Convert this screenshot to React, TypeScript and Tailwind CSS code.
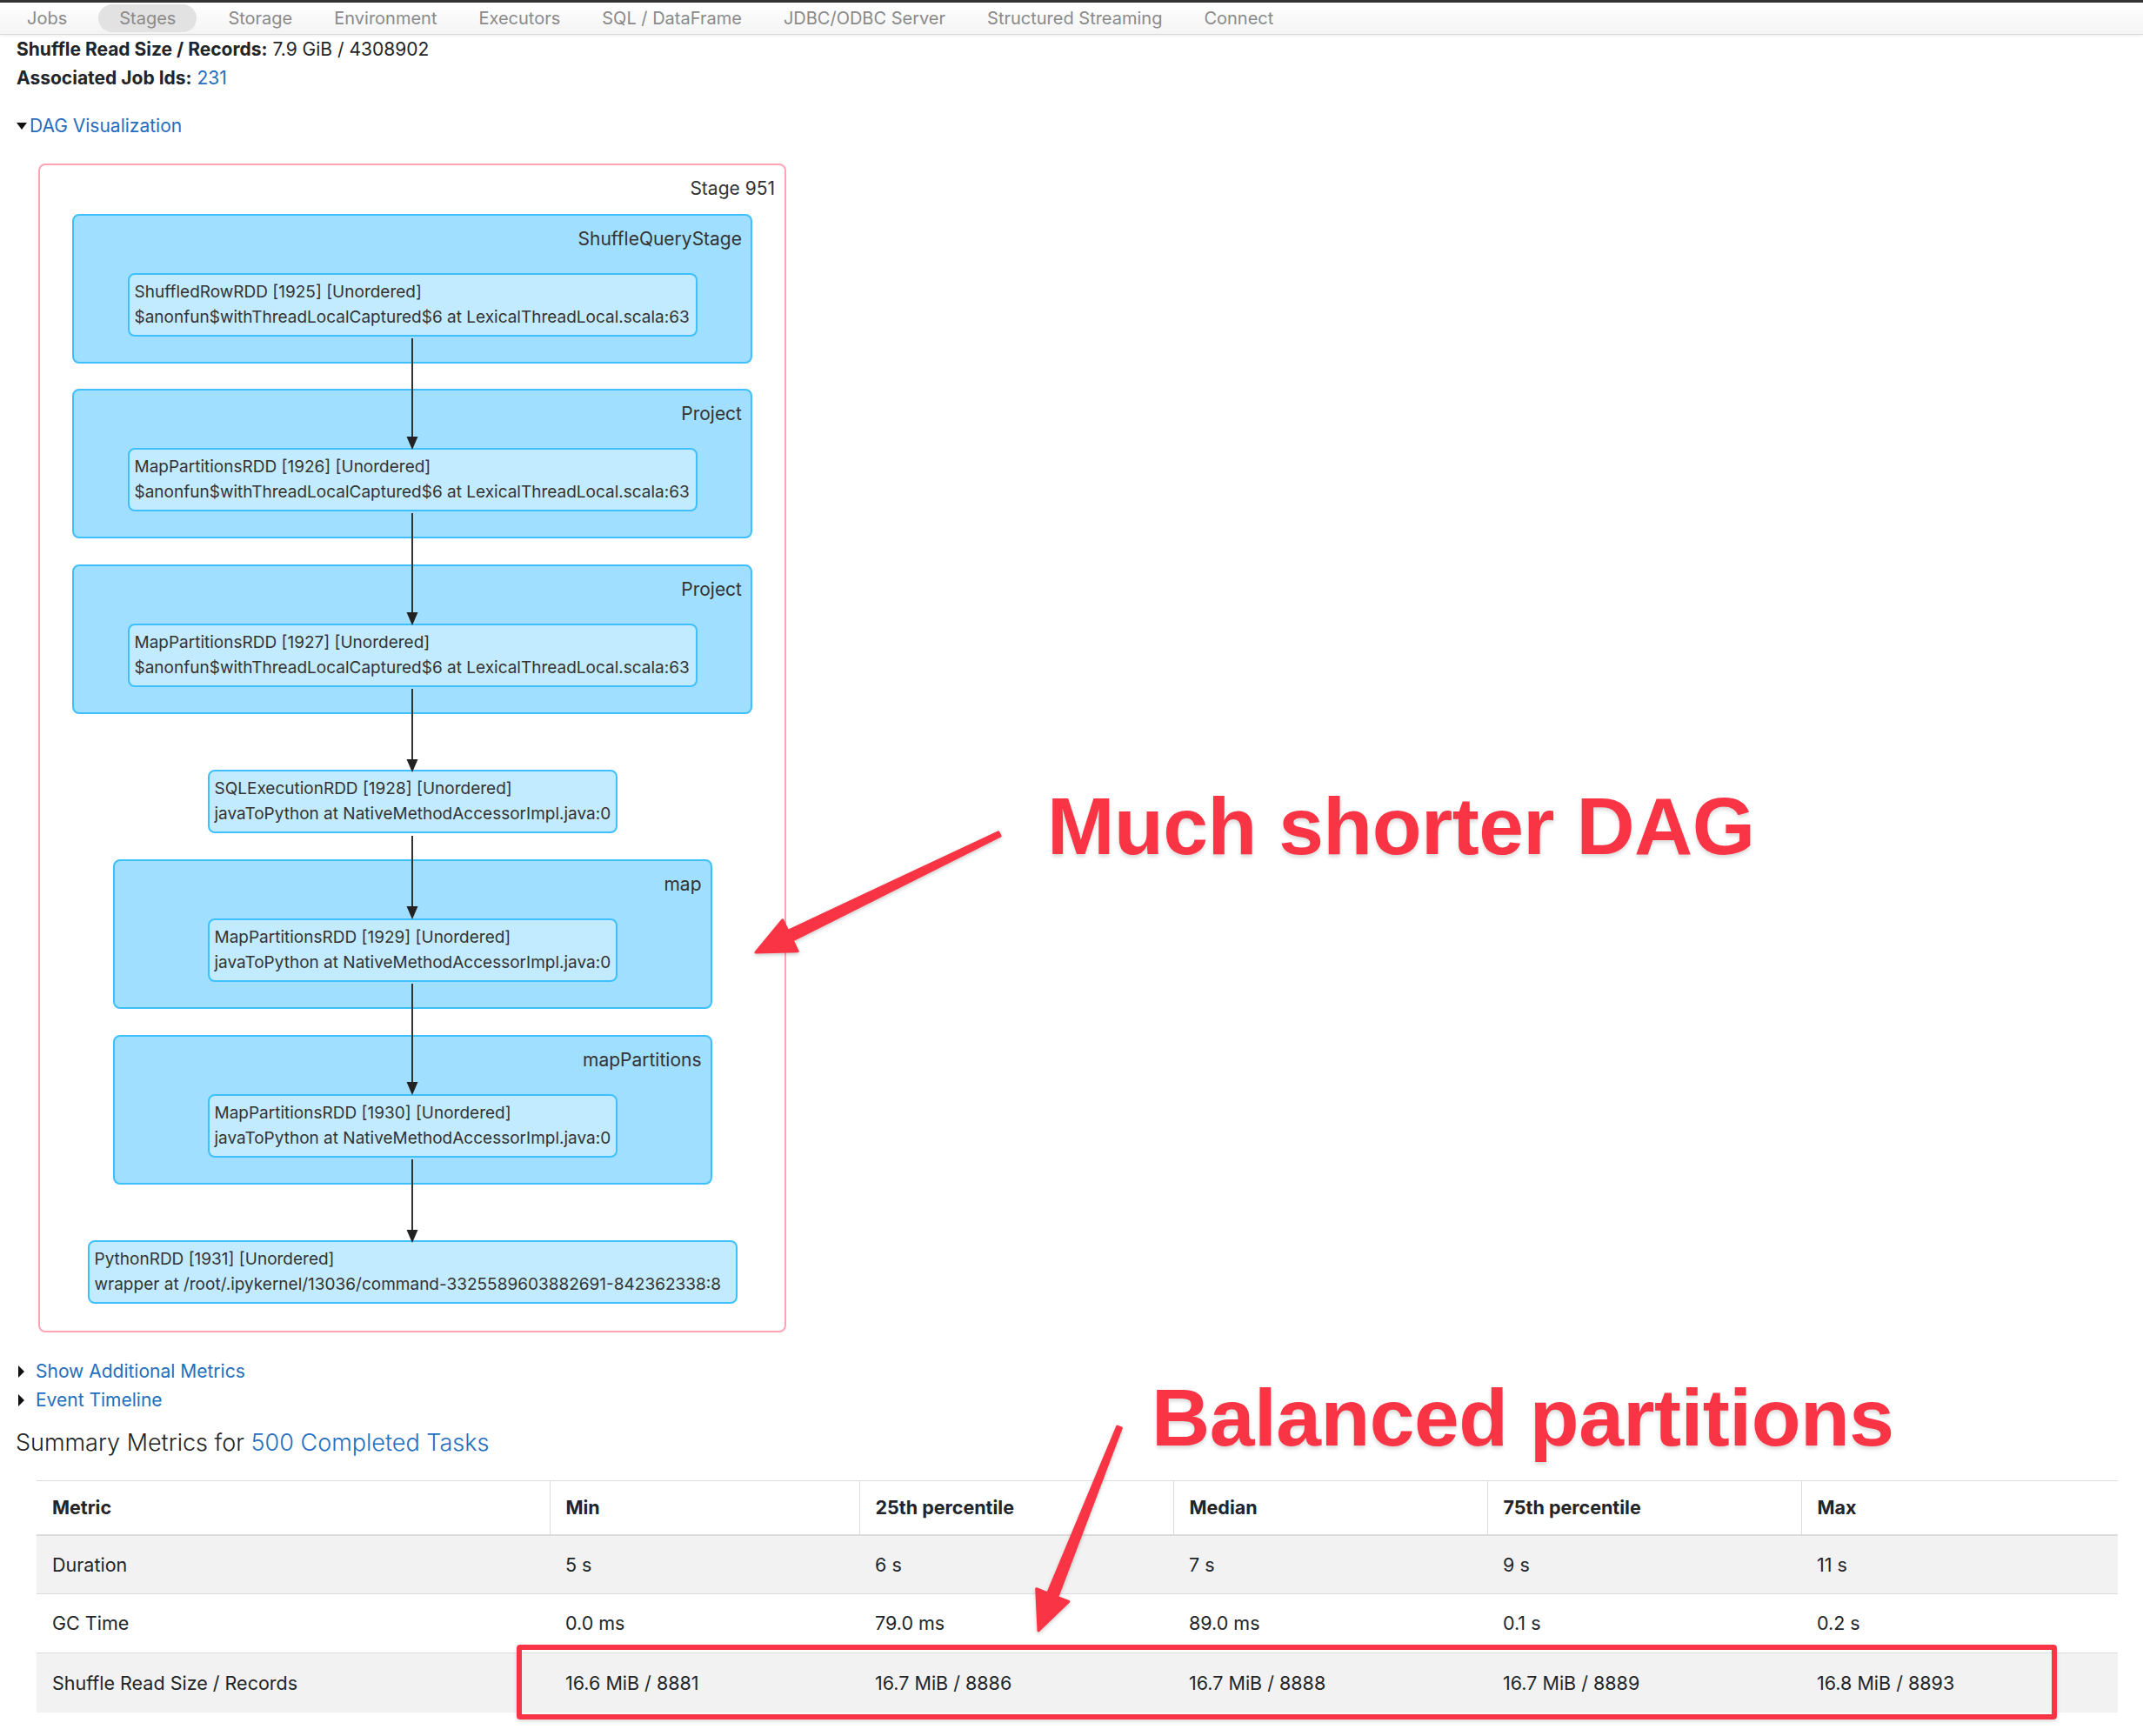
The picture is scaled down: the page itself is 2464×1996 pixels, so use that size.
import React from "react";

const navItems = [
  "Jobs",
  "Stages",
  "Storage",
  "Environment",
  "Executors",
  "SQL / DataFrame",
  "JDBC/ODBC Server",
  "Structured Streaming",
  "Connect",
];

const DESC_SCALA = "$anonfun$withThreadLocalCaptured$6 at LexicalThreadLocal.scala:63";
const DESC_JAVA = "javaToPython at NativeMethodAccessorImpl.java:0";

const headers = ["Metric", "Min", "25th percentile", "Median", "75th percentile", "Max"];
const colWidths = ["w-[590px]", "w-[356px]", "w-[361px]", "w-[361px]", "w-[361px]", "w-[364px]"];

const rows = [
  ["Duration", "5 s", "6 s", "7 s", "9 s", "11 s"],
  ["GC Time", "0.0 ms", "79.0 ms", "89.0 ms", "0.1 s", "0.2 s"],
  [
    "Shuffle Read Size / Records",
    "16.6 MiB / 8881",
    "16.7 MiB / 8886",
    "16.7 MiB / 8888",
    "16.7 MiB / 8889",
    "16.8 MiB / 8893",
  ],
];

function RddNode({ title, desc, width }: { title: string; desc: string; width: string }) {
  return (
    <div
      className={`${width} h-[73px] shrink-0 rounded-[8px] border-2 border-[#3ec0ff] bg-[#c3ebff] px-[6px] pt-[5px] text-[19px] leading-[29px] text-[#333] whitespace-nowrap`}
    >
      <div>{title}</div>
      <div>{desc}</div>
    </div>
  );
}

function Cluster({
  label,
  width,
  className,
  children,
}: {
  label: string;
  width: string;
  className?: string;
  children: React.ReactNode;
}) {
  return (
    <div
      className={`${width} ${className ?? ""} h-[172px] shrink-0 flex flex-col rounded-[8px] border-2 border-[#3ec0ff] bg-[#a0dfff]`}
    >
      <div className="self-end pr-[10px] pt-[13px] h-[41px] text-[21px] leading-[28px] text-[#333]">
        {label}
      </div>
      <div className="self-center mt-[25px]">{children}</div>
    </div>
  );
}

// edges of the DAG, in panel coordinates (center x = 428)
const edges = [
  [199, 327],
  [400, 529],
  [602, 698],
  [771, 867],
  [941, 1069],
  [1143, 1239],
];

function DagEdges() {
  return (
    <svg className="absolute left-0 top-0 pointer-events-none" width={860} height={1344}>
      {edges.map(([y1, y2]) => (
        <g key={y1}>
          <line x1={428} y1={y1} x2={428} y2={y2 - 12} stroke="#333" strokeWidth={2} />
          <polygon points={`421.5,${y2 - 15} 434.5,${y2 - 15} 428,${y2}`} fill="#222" />
        </g>
      ))}
    </svg>
  );
}

function arrowPoints(sx: number, sy: number, tx: number, ty: number) {
  const dx = tx - sx;
  const dy = ty - sy;
  const len = Math.hypot(dx, dy);
  const ux = dx / len;
  const uy = dy / len;
  const nx = -uy;
  const ny = ux;
  const head = 44;
  const bx = tx - ux * head;
  const by = ty - uy * head;
  const pts: [number, number][] = [
    [sx + nx * 2.5, sy + ny * 2.5],
    [bx + nx * 6, by + ny * 6],
    [bx + nx * 20, by + ny * 20],
    [tx, ty],
    [bx - nx * 20, by - ny * 20],
    [bx - nx * 6, by - ny * 6],
    [sx - nx * 2.5, sy - ny * 2.5],
  ];
  return pts.map((p) => `${p[0].toFixed(1)},${p[1].toFixed(1)}`).join(" ");
}

function Triangle({ down }: { down?: boolean }) {
  return down ? (
    <svg width="12" height="10" viewBox="0 0 12 10" className="mr-[3px]">
      <polygon points="0,1 12,1 6,9" fill="#111" />
    </svg>
  ) : (
    <svg width="9" height="14" viewBox="0 0 9 14" className="mr-[12px]">
      <polygon points="1,0 8,7 1,14" fill="#111" />
    </svg>
  );
}

export default function App() {
  return (
    <div className="relative w-[2464px] h-[1996px] overflow-hidden bg-white font-['Inter','Noto_Sans',sans-serif] text-[#212529]">
      {/* top nav */}
      <div className="h-[40px] border-t-[3px] border-[#333] bg-gradient-to-b from-white to-[#f4f4f4] border-b border-b-[#d8d8d8] shadow-[0_1px_4px_rgba(0,0,0,0.08)] flex items-center pl-[13px] gap-[12px]">
        {navItems.map((item) => (
          <div
            key={item}
            className={`h-[32px] flex items-center rounded-full text-[20px] text-[#8a8a8a] ${
              item === "Stages" ? "bg-[#e2e2e2] px-[24px] mx-[6px]" : "px-[18px]"
            }`}
          >
            {item}
          </div>
        ))}
      </div>

      {/* stage summary */}
      <div className="pl-[19px] text-[21px] leading-[30px]">
        <div className="mt-[2px]">
          <span className="font-bold">Shuffle Read Size / Records:</span> 7.9 GiB / 4308902
        </div>
        <div className="mt-[3px]">
          <span className="font-bold">Associated Job Ids:</span>{" "}
          <span className="text-[#236ebe]">231</span>
        </div>
        <div className="mt-[25px] flex items-center text-[#236ebe]">
          <Triangle down />
          DAG Visualization
        </div>
      </div>

      {/* DAG */}
      <div className="relative ml-[44px] mt-[28px] w-[860px] h-[1344px] rounded-[8px] border-2 border-[#ffa4b4] flex flex-col items-center">
        <div className="absolute right-[11px] top-[13px] text-[21px] leading-[28px] text-[#333]">Stage 951</div>
        <Cluster label="ShuffleQueryStage" width="w-[782px]" className="mt-[56px]">
          <RddNode title="ShuffledRowRDD [1925] [Unordered]" desc={DESC_SCALA} width="w-[655px]" />
        </Cluster>
        <Cluster label="Project" width="w-[782px]" className="mt-[29px]">
          <RddNode title="MapPartitionsRDD [1926] [Unordered]" desc={DESC_SCALA} width="w-[655px]" />
        </Cluster>
        <Cluster label="Project" width="w-[782px]" className="mt-[30px]">
          <RddNode title="MapPartitionsRDD [1927] [Unordered]" desc={DESC_SCALA} width="w-[655px]" />
        </Cluster>
        <div className="mt-[64px]">
          <RddNode title="SQLExecutionRDD [1928] [Unordered]" desc={DESC_JAVA} width="w-[471px]" />
        </div>
        <Cluster label="map" width="w-[689px]" className="mt-[30px]">
          <RddNode title="MapPartitionsRDD [1929] [Unordered]" desc={DESC_JAVA} width="w-[471px]" />
        </Cluster>
        <Cluster label="mapPartitions" width="w-[689px]" className="mt-[30px]">
          <RddNode title="MapPartitionsRDD [1930] [Unordered]" desc={DESC_JAVA} width="w-[471px]" />
        </Cluster>
        <div className="mt-[64px]">
          <RddNode
            title="PythonRDD [1931] [Unordered]"
            desc="wrapper at /root/.ipykernel/13036/command-3325589603882691-842362338:8"
            width="w-[747px]"
          />
        </div>
        <DagEdges />
      </div>

      {/* collapsible links */}
      <div className="pl-[20px] mt-[28px] text-[21px] leading-[33px] text-[#236ebe]">
        <div className="flex items-center">
          <Triangle />
          Show Additional Metrics
        </div>
        <div className="flex items-center">
          <Triangle />
          Event Timeline
        </div>
      </div>
      <div className="pl-[18px] mt-[13px] text-[27px] leading-[40px] font-light text-[#222]">
        Summary Metrics for <span className="text-[#236ebe]">500 Completed Tasks</span>
      </div>

      {/* summary table */}
      <table className="ml-[42px] mt-[23px] border-collapse table-fixed text-[21.5px] text-[#212529]">
        <thead>
          <tr className="h-[62px] border-t border-[#dcdcdc] border-b-2 border-b-[#dcdcdc]">
            {headers.map((h, i) => (
              <th
                key={h}
                className={`${colWidths[i]} text-left font-bold px-[18px] ${i > 0 ? "border-l border-[#dcdcdc]" : ""}`}
              >
                {h}
              </th>
            ))}
          </tr>
        </thead>
        <tbody>
          {rows.map((r, ri) => (
            <tr
              key={r[0]}
              className={`h-[68px] border-t border-[#dcdcdc] ${ri % 2 === 0 ? "bg-[#f2f2f2]" : "bg-white"}`}
            >
              {r.map((c, ci) => (
                <td key={ci} className="px-[18px]">
                  {c}
                </td>
              ))}
            </tr>
          ))}
        </tbody>
      </table>

      {/* annotations */}
      <div className="absolute left-[594px] top-[1891px] w-[1771px] h-[86px] rounded-[4px] border-[6px] border-[#f93445] shadow-[0_2px_4px_rgba(0,0,0,0.15)] pointer-events-none" />
      <svg
        className="absolute left-0 top-0 pointer-events-none drop-shadow-[0_2px_2px_rgba(0,0,0,0.2)]"
        width={2464}
        height={1996}
      >
        <polygon points={arrowPoints(1149, 959, 869, 1095)} fill="#f93445" stroke="#f93445" strokeWidth={3} strokeLinejoin="round" />
        <polygon points={arrowPoints(1287, 1641, 1194, 1875)} fill="#f93445" stroke="#f93445" strokeWidth={3} strokeLinejoin="round" />
      </svg>
      <div className="absolute left-[1204px] top-[904px] text-[93px] leading-none font-bold tracking-[-0.5px] text-[#f93445] font-['Liberation_Sans',Arial,sans-serif] [text-shadow:0_3px_4px_rgba(0,0,0,0.15)] whitespace-nowrap">
        Much shorter DAG
      </div>
      <div className="absolute left-[1324px] top-[1584px] text-[93px] leading-none font-bold tracking-[-0.5px] text-[#f93445] font-['Liberation_Sans',Arial,sans-serif] [text-shadow:0_3px_4px_rgba(0,0,0,0.15)] whitespace-nowrap">
        Balanced partitions
      </div>
    </div>
  );
}
